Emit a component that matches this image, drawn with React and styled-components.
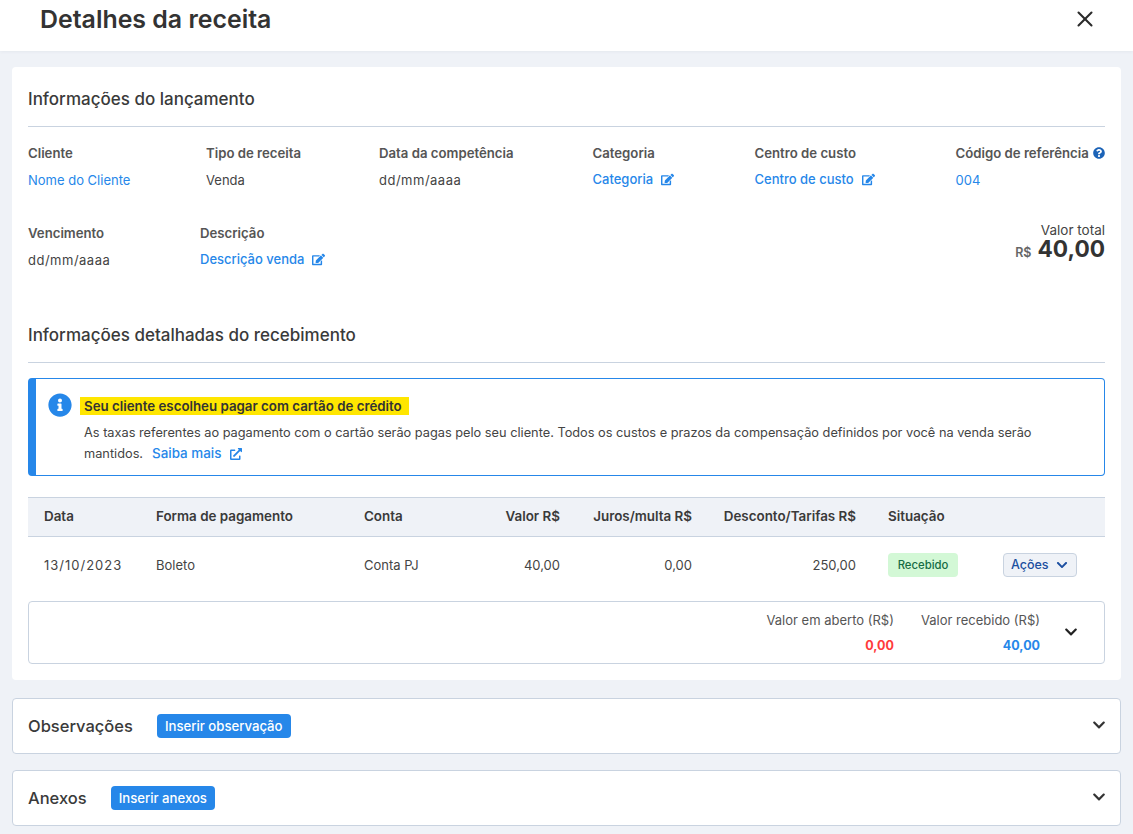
import React from 'react';
import styled, { createGlobalStyle } from 'styled-components';
import { FaEdit, FaInfoCircle, FaQuestionCircle, FaExternalLinkAlt, FaChevronDown } from 'react-icons/fa';
import { X } from 'lucide-react';

const GlobalStyle = createGlobalStyle`
  html, body {
    margin: 0;
    padding: 0;
    background: #eff2f7;
    font-family: Inter, "Noto Sans", sans-serif;
    color: #3a3a3a;
  }
  * { box-sizing: border-box; }
`;

const Page = styled.div`
  width: 1133px;
  height: 834px;
  overflow: hidden;
  background: #eff2f7;
`;

const Header = styled.header`
  height: 51px;
  background: #fff;
  display: flex;
  align-items: flex-start;
  justify-content: space-between;
  padding: 4px 35px 0 40px;
  box-shadow: 0 1px 3px rgba(60, 80, 110, 0.06);
`;

const Title = styled.h1`
  margin: 0;
  font-size: 24.9px;
  line-height: 30px;
  font-weight: 600;
  color: #333;
`;

const CloseButton = styled.div`
  display: flex;
  color: #2b2b2b;
  margin-top: 2px;
`;

const Content = styled.main`
  padding: 16px 12px 0;
  display: flex;
  flex-direction: column;
`;

const Card = styled.section`
  background: #fff;
  border-radius: 4px;
  padding: 16px;
  height: 613px;
  margin-bottom: 18px;
`;

const SectionTitle = styled.h2`
  margin: 0;
  height: 44px;
  padding-top: 5px;
  font-size: 17px;
  line-height: 22px;
  font-weight: 500;
  color: #3a3a3a;
  border-bottom: 1px solid #c9d3e0;
`;

const FieldsTop = styled.div`
  display: grid;
  grid-template-columns: 178px 173px 213.5px 162px 201px 1fr;
  margin-top: 17px;
`;

const FieldsBottom = styled.div`
  display: flex;
  margin-top: 35px;
  height: 95px;
`;

const Field = styled.div`
  width: ${(p) => p.$width || 'auto'};
`;

const Label = styled.div`
  display: flex;
  align-items: center;
  justify-content: space-between;
  font-size: 13.2px;
  line-height: 18px;
  font-weight: 600;
  color: #555;
  white-space: nowrap;
`;

const Value = styled.div`
  margin-top: 9px;
  font-size: 13px;
  line-height: 18px;
  letter-spacing: ${(p) => (p.$date ? '0.5px' : '0')};
  color: ${(p) => (p.$link ? '#2687e9' : '#444')};
`;

const EditValue = styled.div`
  margin-top: 8px;
  display: flex;
  align-items: center;
  gap: 8px;
  font-size: 13px;
  line-height: 18px;
  font-weight: 500;
  color: #2687e9;
`;

const Total = styled.div`
  margin-left: auto;
  text-align: right;
  margin-top: -2px;
`;

const TotalLabel = styled.div`
  font-size: 13.5px;
  line-height: 16px;
  color: #444;
`;

const TotalValue = styled.div`
  font-size: 22.7px;
  line-height: 21px;
  font-weight: 700;
  color: #333;
`;

const Currency = styled.span`
  font-size: 12.5px;
  font-weight: 600;
  color: #666;
  margin-right: 6px;
`;

const Notice = styled.div`
  margin-top: 15px;
  height: 98px;
  border: 1px solid #2687e9;
  border-left: 8px solid #2687e9;
  border-radius: 4px;
  padding: 16px 40px 0 12px;
  display: flex;
  gap: 8px;
`;

const NoticeIcon = styled.div`
  flex: none;
  color: #2687e9;
  display: flex;
  height: 24px;
  margin-top: -2px;
`;

const NoticeBody = styled.div`
  flex: 1;
`;

const Highlight = styled.div`
  display: inline-block;
  background: #ffe600;
  padding: 0 7px 0 4px;
  height: 18px;
  font-size: 13.3px;
  line-height: 18px;
  font-weight: 600;
  color: #333;
  white-space: nowrap;
`;

const NoticeText = styled.p`
  margin: 7px 0 0 4px;
  font-size: 12.77px;
  line-height: 21px;
  color: #444;
`;

const NoticeLink = styled.span`
  display: inline-flex;
  align-items: center;
  gap: 9px;
  margin-left: 9px;
  font-size: 13.4px;
  font-weight: 500;
  color: #2687e9;
  vertical-align: baseline;
`;

const Row = styled.div`
  display: grid;
  grid-template-columns: 112px 208px 106px 90px 132px 164px 147px 1fr;
  align-items: center;
  padding-left: 16px;
`;

const TableHead = styled(Row)`
  margin-top: 21px;
  height: 40px;
  padding-bottom: 2px;
  background: #eff2f7;
  border-top: 1px solid #c9d3e0;
  border-bottom: 1px solid #c9d3e0;
`;

const TableBody = styled(Row)`
  height: 56px;
  padding-bottom: 1px;
`;

const HeadCell = styled.div`
  font-size: 13.4px;
  font-weight: 600;
  color: #3a3a3a;
  text-align: ${(p) => (p.$right ? 'right' : 'left')};
  padding-left: ${(p) => (p.$pad ? '32px' : '0')};
  white-space: nowrap;
`;

const Cell = styled.div`
  font-size: 13px;
  color: #444;
  text-align: ${(p) => (p.$right ? 'right' : 'left')};
  padding-left: ${(p) => (p.$pad ? '32px' : '0')};
  letter-spacing: ${(p) => (p.$date ? '1px' : '0')};
`;

const Badge = styled.span`
  display: inline-block;
  width: 70px;
  height: 24px;
  border-radius: 4px;
  background: #d3f8d6;
  color: #166c45;
  font-size: 11.3px;
  font-weight: 500;
  line-height: 24px;
  text-align: center;
`;

const ActionButton = styled.button`
  width: 74px;
  height: 24px;
  padding: 0 0 0 7px;
  display: flex;
  align-items: center;
  gap: 7px;
  border: 1px solid #c9d3e0;
  border-radius: 4px;
  background: #eff2f7;
  color: #1c4fa0;
  font-family: inherit;
  font-size: 12.5px;
  font-weight: 500;
`;

const Summary = styled.div`
  margin-top: 8px;
  height: 63px;
  border: 1px solid #c9d3e0;
  border-radius: 4px;
  display: flex;
  justify-content: flex-end;
  padding: 9px 26px 0 0;
`;

const SummaryCol = styled.div`
  text-align: right;
  margin-right: ${(p) => p.$gap || '0'};
`;

const SummaryLabel = styled.div`
  font-size: 13px;
  line-height: 18px;
  color: #555;
`;

const SummaryValue = styled.div`
  margin-top: 8px;
  font-size: 12.5px;
  line-height: 18px;
  font-weight: 700;
  color: ${(p) => p.$color};
`;

const SummaryToggle = styled.div`
  display: flex;
  margin: 14px 0 0 24px;
  color: #222;
`;

const Accordion = styled.section`
  height: 56px;
  background: #fff;
  border: 1px solid #c9d3e0;
  border-radius: 4px;
  display: flex;
  align-items: center;
  padding: 0 14px 0 15px;
  margin-bottom: 16px;
`;

const AccordionTitle = styled.h3`
  margin: 0 24px 0 0;
  font-size: 16.5px;
  font-weight: 500;
  color: #3a3a3a;
`;

const PrimaryButton = styled.button`
  height: 24px;
  padding: 0 8px;
  border: 0;
  border-radius: 4px;
  background: #2687e9;
  color: #fff;
  font-family: inherit;
  font-size: 13.15px;
  font-weight: 500;
`;

const AccordionToggle = styled.div`
  margin-left: auto;
  margin-bottom: 2px;
  display: flex;
  color: #333;
`;

function EditField({ label, value }) {
  return (
    <Field>
      <Label>{label}</Label>
      <EditValue>
        {value}
        <FaEdit size={13} />
      </EditValue>
    </Field>
  );
}

function App() {
  return (
    <Page>
      <GlobalStyle />
      <Header>
        <Title>Detalhes da receita</Title>
        <CloseButton>
          <X size={26} strokeWidth={1.9} />
        </CloseButton>
      </Header>
      <Content>
        <Card>
          <SectionTitle>Informações do lançamento</SectionTitle>
          <FieldsTop>
            <Field>
              <Label>Cliente</Label>
              <Value $link>Nome do Cliente</Value>
            </Field>
            <Field>
              <Label>Tipo de receita</Label>
              <Value>Venda</Value>
            </Field>
            <Field>
              <Label>Data da competência</Label>
              <Value $date>dd/mm/aaaa</Value>
            </Field>
            <EditField label="Categoria" value="Categoria" />
            <EditField label="Centro de custo" value="Centro de custo" />
            <Field>
              <Label>
                Código de referência
                <FaQuestionCircle size={12} color="#1c63b7" />
              </Label>
              <Value $link>004</Value>
            </Field>
          </FieldsTop>
          <FieldsBottom>
            <Field $width="172px">
              <Label>Vencimento</Label>
              <Value $date>dd/mm/aaaa</Value>
            </Field>
            <EditField label="Descrição" value="Descrição venda" />
            <Total>
              <TotalLabel>Valor total</TotalLabel>
              <TotalValue>
                <Currency>R$</Currency>40,00
              </TotalValue>
            </Total>
          </FieldsBottom>
          <SectionTitle>Informações detalhadas do recebimento</SectionTitle>
          <Notice>
            <NoticeIcon>
              <FaInfoCircle size={24} />
            </NoticeIcon>
            <NoticeBody>
              <Highlight>Seu cliente escolheu pagar com cartão de crédito</Highlight>
              <NoticeText>
                As taxas referentes ao pagamento com o cartão serão pagas pelo seu cliente. Todos os custos e
                prazos da compensação definidos por você na venda serão mantidos.
                <NoticeLink>
                  Saiba mais
                  <FaExternalLinkAlt size={12} />
                </NoticeLink>
              </NoticeText>
            </NoticeBody>
          </Notice>
          <TableHead>
            <HeadCell>Data</HeadCell>
            <HeadCell>Forma de pagamento</HeadCell>
            <HeadCell>Conta</HeadCell>
            <HeadCell $right>Valor R$</HeadCell>
            <HeadCell $right>Juros/multa R$</HeadCell>
            <HeadCell $right>Desconto/Tarifas R$</HeadCell>
            <HeadCell $pad>Situação</HeadCell>
            <HeadCell />
          </TableHead>
          <TableBody>
            <Cell $date>13/10/2023</Cell>
            <Cell>Boleto</Cell>
            <Cell>Conta PJ</Cell>
            <Cell $right>40,00</Cell>
            <Cell $right>0,00</Cell>
            <Cell $right>250,00</Cell>
            <Cell $pad>
              <Badge>Recebido</Badge>
            </Cell>
            <Cell>
              <ActionButton>
                Ações
                <FaChevronDown size={12} />
              </ActionButton>
            </Cell>
          </TableBody>
          <Summary>
            <SummaryCol $gap="27px">
              <SummaryLabel>Valor em aberto (R$)</SummaryLabel>
              <SummaryValue $color="#ff3b3b">0,00</SummaryValue>
            </SummaryCol>
            <SummaryCol>
              <SummaryLabel>Valor recebido (R$)</SummaryLabel>
              <SummaryValue $color="#2687e9">40,00</SummaryValue>
            </SummaryCol>
            <SummaryToggle>
              <FaChevronDown size={14} />
            </SummaryToggle>
          </Summary>
        </Card>
        <Accordion>
          <AccordionTitle>Observações</AccordionTitle>
          <PrimaryButton>Inserir observação</PrimaryButton>
          <AccordionToggle>
            <FaChevronDown size={14} />
          </AccordionToggle>
        </Accordion>
        <Accordion>
          <AccordionTitle>Anexos</AccordionTitle>
          <PrimaryButton>Inserir anexos</PrimaryButton>
          <AccordionToggle>
            <FaChevronDown size={14} />
          </AccordionToggle>
        </Accordion>
      </Content>
    </Page>
  );
}

export default App;
